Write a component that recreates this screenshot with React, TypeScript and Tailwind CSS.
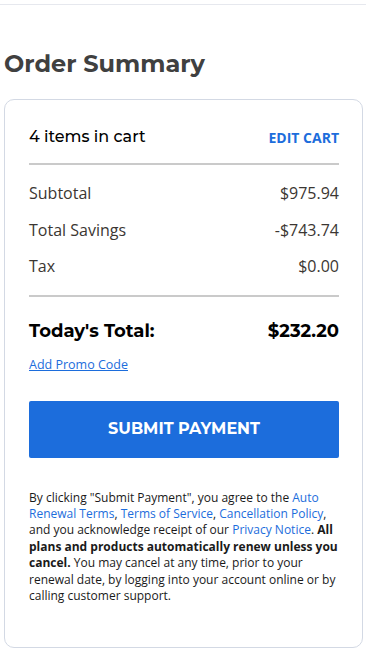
const heading = "font-['Montserrat','Inter','Noto_Sans',sans-serif]";
const body = "font-['Open_Sans','Noto_Sans',sans-serif]";

function Row({ label, value }: { label: string; value: string }) {
  return (
    <div className="flex h-[36.5px] items-center justify-between text-[16px] text-[#3b3632]">
      <span>{label}</span>
      <span>{value}</span>
    </div>
  );
}

export default function App() {
  return (
    <div className={`min-h-[653px] bg-white ${body}`}>
      <div className="h-[5px] border-b border-[#e6e8ee]" />
      <div className="pl-1 pr-[3px]">
        <h2 className={`${heading} mt-[41px] text-[24px] font-bold text-[#404040]`}>
          Order Summary
        </h2>
        <section className="mt-[17px] h-[549px] rounded-[10px] border border-[#d3d9e4] pl-6 pr-[23px] pt-[25px]">
          <div className="flex items-center justify-between">
            <span className={`${heading} text-[16px] font-medium text-black`}>4 items in cart</span>
            <a className="text-[14px] font-bold text-[#1c6ddc]">EDIT CART</a>
          </div>
          <div className="mt-[14px] h-[2px] bg-[#cacaca]" />
          <div className="py-[10px]">
            <Row label="Subtotal" value="$975.94" />
            <Row label="Total Savings" value="-$743.74" />
            <Row label="Tax" value="$0.00" />
          </div>
          <div className="h-[2px] bg-[#cacaca]" />
          <div className={`${heading} mt-[21px] flex items-center justify-between text-[18px] font-bold text-black`}>
            <span>Today's Total:</span>
            <span>$232.20</span>
          </div>
          <a className="mt-[11px] inline-block text-[12.5px] text-[#1c6ddc] underline">Add Promo Code</a>
          <button
            className={`${heading} mt-[26px] flex h-[57px] w-full items-center justify-center rounded-[2px] bg-[#1c6ddc] text-[16px] font-bold text-white`}
          >
            SUBMIT PAYMENT
          </button>
          <p className="mt-[32px] text-[12px] leading-[16.4px] text-[#1a1a1a]">
            By clicking "Submit Payment", you agree to the{" "}
            <a className="text-[#1c6ddc]">Auto Renewal Terms</a>,{" "}
            <a className="text-[#1c6ddc]">Terms of Service</a>,{" "}
            <a className="text-[#1c6ddc]">Cancellation Policy</a>, and you acknowledge receipt of our{" "}
            <a className="text-[#1c6ddc]">Privacy Notice</a>.{" "}
            <b>All plans and products automatically renew unless you cancel.</b> You may cancel at any time, prior to
            your renewal date, by logging into your account online or by calling customer support.
          </p>
        </section>
      </div>
    </div>
  );
}
